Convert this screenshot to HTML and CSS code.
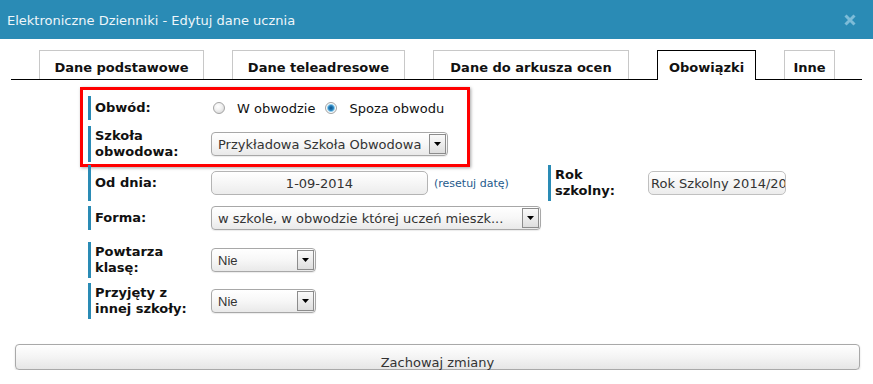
FILE: index.html
```html
<!DOCTYPE html>
<html lang="pl">
<head>
  <meta charset="UTF-8" />
  <title>Edytuj dane ucznia</title>
  <link rel="stylesheet" href="styles.css">
</head>
<body>
  <div class="dialog">
    <div class="titlebar">
      <span class="title">Elektroniczne Dzienniki - Edytuj dane ucznia</span>
      <svg class="close" width="12" height="12" viewBox="0 0 12 12">
        <path d="M1.5 1.5 L10.5 10.5 M10.5 1.5 L1.5 10.5" stroke="#7dbcd8" stroke-width="3" fill="none" />
      </svg>
    </div>

    <ul class="tabs">
      <li class="tab">Dane podstawowe</li>
      <li class="tab">Dane teleadresowe</li>
      <li class="tab">Dane do arkusza ocen</li>
      <li class="tab active">Obowiązki</li>
      <li class="tab">Inne</li>
    </ul>

    <form class="form">
      <div class="highlight">
        <div class="field">
          <label class="label">Obwód:</label>
          <div class="radios">
            <label class="radio"><input type="radio" name="obwod"> W obwodzie</label>
            <label class="radio"><input type="radio" name="obwod" checked> Spoza obwodu</label>
          </div>
        </div>
        <div class="field">
          <label class="label">Szkoła obwodowa:</label>
          <div class="select select-szkola">
            <select><option>Przykładowa Szkoła Obwodowa</option></select>
            <span class="select-arrow"><svg width="7" height="4" viewBox="0 0 7 4"><path d="M0 0 H7 L3.5 4 Z" fill="#000" /></svg></span>
          </div>
        </div>
      </div>

      <div class="row">
        <div class="field field-date">
          <label class="label">Od dnia:</label>
          <input class="input input-date" type="text" value="1-09-2014">
          <a class="reset" href="#">(resetuj datę)</a>
        </div>
        <div class="field">
          <label class="label label-short">Rok szkolny:</label>
          <input class="input input-rok" type="text" value="Rok Szkolny 2014/2015">
        </div>
      </div>

      <div class="field field-spaced">
        <label class="label">Forma:</label>
        <div class="select select-forma">
          <select><option>w szkole, w obwodzie której uczeń mieszk...</option></select>
          <span class="select-arrow"><svg width="7" height="4" viewBox="0 0 7 4"><path d="M0 0 H7 L3.5 4 Z" fill="#000" /></svg></span>
        </div>
      </div>

      <div class="field">
        <label class="label">Powtarza klasę:</label>
        <div class="select select-small">
          <select><option>Nie</option><option>Tak</option></select>
          <span class="select-arrow"><svg width="7" height="4" viewBox="0 0 7 4"><path d="M0 0 H7 L3.5 4 Z" fill="#000" /></svg></span>
        </div>
      </div>

      <div class="field">
        <label class="label">Przyjęty z innej szkoły:</label>
        <div class="select select-small">
          <select><option>Nie</option><option>Tak</option></select>
          <span class="select-arrow"><svg width="7" height="4" viewBox="0 0 7 4"><path d="M0 0 H7 L3.5 4 Z" fill="#000" /></svg></span>
        </div>
      </div>
    </form>

    <button class="save" type="button">Zachowaj zmiany</button>
  </div>
</body>
</html>
```

FILE: styles.css
```css
body {
  margin: 0;
  padding: 0;
  background: #fff;
  font-family: 'DejaVu Sans', Verdana, sans-serif;
  font-size: 13px;
  color: #111;
}
.titlebar {
  height: 39px;
  background: #2a8bb5;
  display: flex;
  align-items: center;
  justify-content: space-between;
  padding: 0 17px 0 7px;
}
.title {
  font-size: 13px;
  color: #eef6fa;
  padding-top: 1px;
}
.close {
  display: block;
}
/* Tabs */
.tabs {
  list-style: none;
  margin: 11px 11px 0;
  padding: 0 0 0 28px;
  display: flex;
  gap: 28px;
  border-bottom: 1px solid #000;
}
.tab {
  box-sizing: border-box;
  border: 1px solid #c8c8c8;
  border-bottom: none;
  padding: 9px 0 4px;
  line-height: 15px;
  font-weight: bold;
  text-align: center;
  white-space: nowrap;
}
.tab:nth-child(1) { width: 165px; }
.tab:nth-child(2) { width: 173px; }
.tab:nth-child(3) { width: 196px; }
.tab:nth-child(4) { width: 99px; }
.tab:nth-child(5) { width: 51px; }
.tab.active {
  border-color: #000;
  background: #fff;
  margin-bottom: -1px;
  padding-bottom: 5px;
}
/* Form */
.form {
  padding: 7px 0 0 88px;
}
.highlight {
  box-sizing: border-box;
  width: 390px;
  margin-left: -8px;
  margin-bottom: -2px;
  border: 3px solid #f00;
  padding: 6px 0 2px 5px;
  box-shadow: 1px 1px 3px rgba(0, 0, 0, 0.35);
}
.row {
  display: flex;
}
.field {
  display: flex;
  align-items: center;
  margin-bottom: 5px;
}
.highlight .field {
  margin-bottom: 6px;
}
.highlight .field:last-child {
  margin-bottom: 0;
}
.field-date {
  width: 460px;
}
.field-spaced {
  margin-bottom: 12px;
}
.label {
  align-self: stretch;
  display: flex;
  align-items: center;
  box-sizing: border-box;
  width: 123px;
  min-height: 24px;
  border-left: 3px solid #2a8bb5;
  padding: 2px 6px 2px 4px;
  font-weight: bold;
  line-height: 16px;
}
.label-short {
  width: 100px;
  padding-right: 18px;
}
.radios {
  display: flex;
  align-items: center;
  padding-left: 2px;
}
.radio {
  display: flex;
  align-items: center;
  margin-right: 10px;
}
.radio input {
  appearance: none;
  width: 12px;
  height: 12px;
  margin: 0 12px 0 0;
  border: 1px solid #a4a4a4;
  border-radius: 50%;
  background: radial-gradient(circle at 40% 35%, #fff 0, #f2f2f2 40%, #cfcfcf 100%);
}
.radio input:checked {
  background: radial-gradient(circle at 50% 50%, #0d4f86 0, #2b86c2 2.5px, #8ccbea 3.5px, #fff 4.5px, #d0d0d0 100%);
}
.select {
  display: flex;
  box-sizing: border-box;
  height: 24px;
  border: 1px solid #a8a8a8;
  border-radius: 4px;
  background: linear-gradient(#fff, #f7f7f7 50%, #e9e9e9);
  box-shadow: 0 1px 1px rgba(0, 0, 0, 0.08);
  overflow: hidden;
}
.select select {
  appearance: none;
  flex: 1;
  min-width: 0;
  border: none;
  background: transparent;
  font-family: 'DejaVu Sans', Verdana, sans-serif;
  font-size: 13px;
  color: #333;
  padding: 0 0 0 6px;
  outline: none;
}
.select-arrow {
  display: flex;
  align-items: center;
  justify-content: center;
  width: 15px;
  margin: 1px 1px 1px 0;
  border: 1px solid #8c8c8c;
  background: linear-gradient(#fafafa, #dedede);
}
.select-szkola { width: 237px; }
.select-forma { width: 330px; }
.select-small { width: 105px; }
.select-small select {
  font-family: 'Liberation Sans', Arial, sans-serif;
}
.input {
  box-sizing: border-box;
  height: 24px;
  border: 1px solid #b4b4b4;
  border-radius: 5px;
  background: linear-gradient(#fff, #f6f6f6 50%, #ececec);
  font-family: 'DejaVu Sans', Verdana, sans-serif;
  font-size: 13px;
  color: #333;
  outline: none;
}
.input-date {
  width: 217px;
  text-align: center;
  padding: 0;
}
.input-rok {
  width: 138px;
  padding: 0 0 0 2px;
  border-color: #c0c0c0;
}
.reset {
  margin-left: 6px;
  font-size: 11px;
  color: #1e5a8c;
  text-decoration: none;
}
.save {
  display: block;
  box-sizing: border-box;
  width: 845px;
  height: 26px;
  margin: 25px 0 0 15px;
  padding: 10px 0 0;
  border: 1px solid #a9a9a9;
  border-radius: 4px;
  background: linear-gradient(#fff, #f4f4f4 50%, #e6e6e6);
  box-shadow: 0 1px 2px rgba(0, 0, 0, 0.15);
  font-family: 'DejaVu Sans', Verdana, sans-serif;
  font-size: 13px;
  line-height: 15px;
  color: #333;
}
```
